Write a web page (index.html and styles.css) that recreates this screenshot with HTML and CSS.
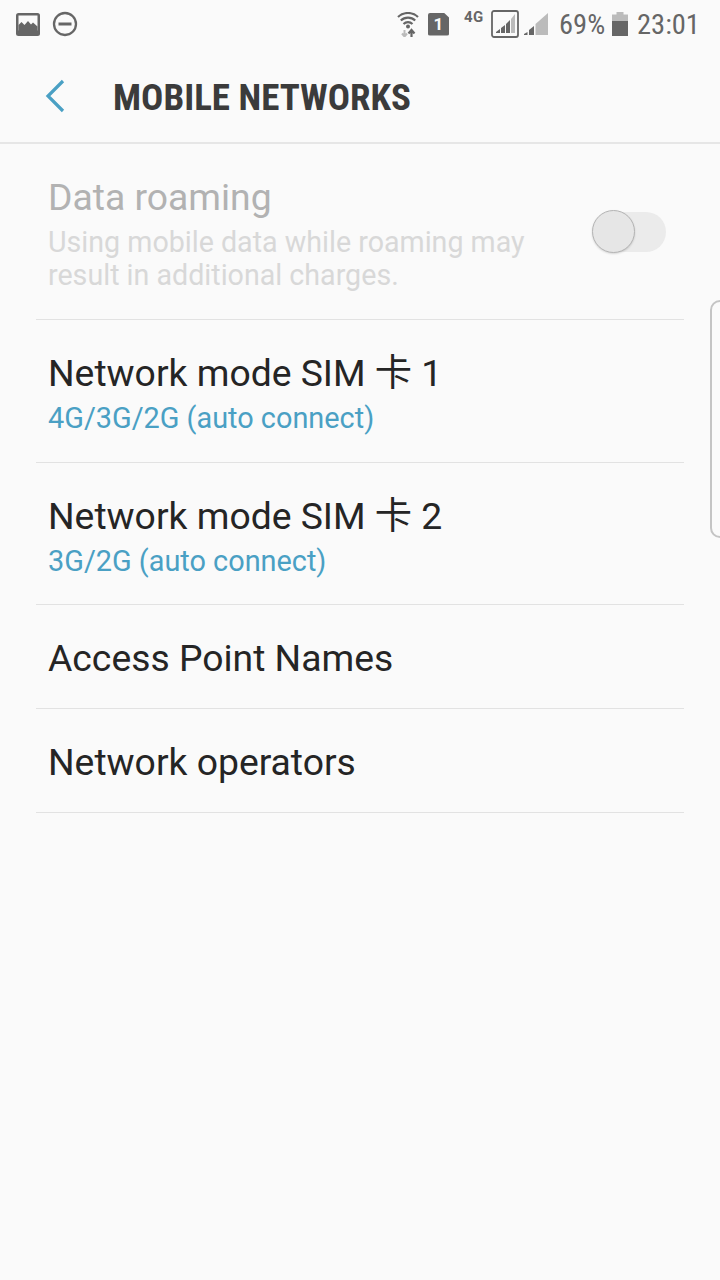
FILE: index.html
```html
<!DOCTYPE html>
<html lang="en">
<head>
<meta charset="utf-8">
<title>Mobile networks</title>
<link rel="stylesheet" href="styles.css">
</head>
<body>
<div class="status">
  <div class="status-left">
    <svg class="ic" width="24" height="23" viewBox="0 0 24 23"><rect width="24" height="23" rx="2.500" fill="#666"/><rect x="2.500" y="2.500" width="19" height="15" fill="#fafafa"/><path d="M2.500 18v-6l3-3 3 3 3.500-4 3 3.500 2-2 4.500 4V18z" fill="#666"/></svg>
    <svg class="ic" width="26" height="26" viewBox="0 0 26 26"><circle cx="13" cy="13" r="11" fill="none" stroke="#666" stroke-width="2.300"/><rect x="6.500" y="11.500" width="13" height="3" fill="#666"/></svg>
  </div>
  <div class="status-right">
    <svg class="wifi" width="22" height="25" viewBox="0 0 22 25"><path d="M1 5a14.500 14.500 0 0 1 20 0M3.800 8.500a10.500 10.500 0 0 1 14.400 0M6.500 12a6.500 6.500 0 0 1 9 0" fill="none" stroke="#666" stroke-width="2.200"/><circle cx="11" cy="14.500" r="2" fill="#666"/><path d="M7.500 18v6M5 21.500l2.500 3 2.500-3" fill="none" stroke="#bbb" stroke-width="2"/><path d="M14.500 25v-6M11.500 21.500l3-3.500 3 3.500" fill="none" stroke="#666" stroke-width="2.200"/></svg>
    <div class="sim"><span class="sim-num">1</span></div>
    <span class="net">4G</span>
    <svg class="sig1" width="28" height="28" viewBox="0 0 28 28"><rect x="1" y="1" width="26" height="26" rx="2" fill="none" stroke="#666" stroke-width="1.800"/><path d="M5 23h4v-4l-4 3zM10 23h4v-8l-4 3zM15 23h4V10l-4 4z" fill="#666"/><path d="M20 23h4V4l-4 5z" fill="#bbb"/></svg>
    <svg class="sig2" width="24" height="22" viewBox="0 0 24 22"><path d="M0 22h3.500v-3L0 21zM5 22h5v-9l-5 4z" fill="#666"/><path d="M11.500 22H24V0L11.500 11z" fill="#bbb"/></svg>
    <span class="pct">69%</span>
    <svg class="batt" width="16" height="24" viewBox="0 0 16 24"><path d="M4.500 0h7v2.500H16V9H0V2.500h4.500z" fill="#bbb"/><rect y="9" width="16" height="15" fill="#666"/></svg>
    <span class="clock">23:01</span>
  </div>
</div>
<header class="appbar">
  <svg class="back" width="20" height="34" viewBox="0 0 20 34"><path d="M18 2 3 17l15 15" fill="none" stroke="#4aa0c4" stroke-width="3.200"/></svg>
  <h1 class="title">MOBILE NETWORKS</h1>
</header>
<main class="list">
  <div class="row row-roam">
    <div class="row-text">
      <div class="label label-off">Data roaming</div>
      <div class="desc">Using mobile data while roaming may<br>result in additional charges.</div>
    </div>
    <div class="switch"><span class="knob"></span></div>
  </div>
  <div class="row row-two">
    <div class="label">Network mode SIM 卡 1</div>
    <div class="value">4G/3G/2G (auto connect)</div>
  </div>
  <div class="row row-two">
    <div class="label">Network mode SIM 卡 2</div>
    <div class="value">3G/2G (auto connect)</div>
  </div>
  <div class="row row-one"><div class="label">Access Point Names</div></div>
  <div class="row row-one"><div class="label">Network operators</div></div>
</main>
<div class="edge"></div>
</body>
</html>
```
FILE: styles.css
```css
* { box-sizing: border-box; }
html, body { margin: 0; height: 100%; }
body {
  position: relative;
  width: 720px;
  height: 1280px;
  overflow: hidden;
  background: #fafafa;
  font-family: Roboto, "Noto Sans CJK SC", sans-serif;
}
.status {
  height: 48px;
  display: flex;
  justify-content: space-between;
  align-items: center;
  padding: 0 20px 0 16px;
  color: #666;
}
.status-left { display: flex; align-items: center; gap: 12px; }
.status-right { display: flex; align-items: center; }
.ic, .wifi, .sig1, .sig2, .batt { display: block; flex: none; }
.wifi { margin-right: 9px; }
.sim {
  width: 21px;
  height: 23px;
  background: #666;
  border-radius: 2px;
  clip-path: polygon(0 0, 75% 0, 100% 22%, 100% 100%, 0 100%);
  display: flex;
  align-items: center;
  justify-content: center;
  margin-right: 15px;
}
.sim-num { color: #fafafa; font-size: 17px; font-weight: 700; line-height: 1; }
.net { font-size: 15px; font-weight: 700; letter-spacing: .5px; width: 20px; margin: -14px 7px 0 0; line-height: 1; white-space: nowrap; }
.sig1 { margin-right: 5px; }
.sig2 { margin-right: 11px; }
.pct { font-size: 28.500px; line-height: 1; font-stretch: 84%; width: 47px; margin: 3px 6px 0 0; white-space: nowrap; }
.batt { margin-right: 9px; }
.clock { font-size: 28.500px; line-height: 1; font-stretch: 85%; width: 63px; margin-top: 3px; white-space: nowrap; }
.appbar {
  height: 96px;
  display: flex;
  align-items: center;
  padding: 5px 0 0 45px;
  border-bottom: 2px solid #e6e6e6;
}
.back { display: block; margin-right: 48px; margin-top: -3px; }
.title {
  margin: 0;
  font-size: 37px;
  font-weight: 700;
  color: #3b3b3b;
  white-space: nowrap;
  font-stretch: 75%;
}
.list { padding: 0 36px; }
.row {
  border-bottom: 1px solid #e2e2e2;
  padding: 0 12px;
}
.row-roam {
  height: 176px;
  display: flex;
  justify-content: space-between;
  align-items: flex-start;
  padding: 32px 18px 0 12px;
}
.row-two { height: 143px; padding-top: 32px; }
.row-two + .row-two { height: 142px; }
.row-one { height: 104px; display: flex; align-items: center; padding-top: 2px; }
.label { font-size: 37.300px; line-height: 42px; color: #252525; white-space: nowrap; }
.label-off { color: #b2b2b2; }
.desc { font-size: 28.640px; line-height: 33px; color: #d8d8d8; margin-top: 8px; white-space: nowrap; }
.value { font-size: 28.870px; line-height: 34px; color: #4aa0c4; margin-top: 7px; white-space: nowrap; }
.switch {
  position: relative;
  width: 72px;
  height: 40px;
  margin-top: 36px;
  border-radius: 20px;
  background: #ebebeb;
}
.knob {
  position: absolute;
  left: -2px;
  top: -2px;
  width: 43px;
  height: 43px;
  border-radius: 50%;
  background: #e6e6e6;
  border: 1px solid #b4b4b4;
  box-shadow: 0 1px 2px rgba(0,0,0,.15);
}
.edge {
  position: absolute;
  left: 710px;
  top: 300px;
  width: 20px;
  height: 238px;
  border: 2px solid #c4c4c4;
  border-radius: 14px;
}
```
